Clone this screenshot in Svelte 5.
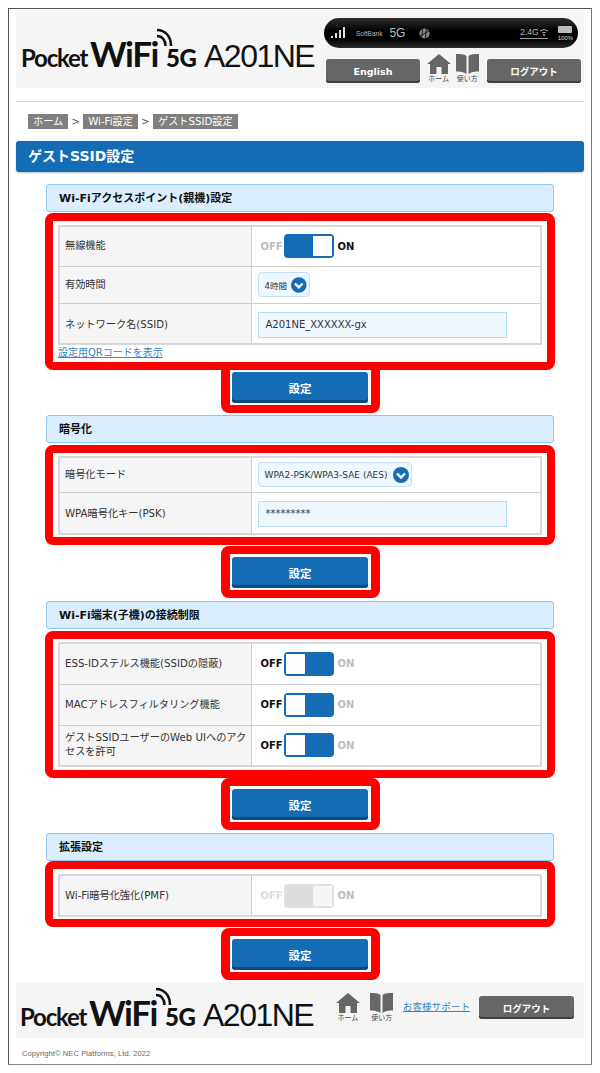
<script>
  const sections = [
    {
      title: 'Wi-Fiアクセスポイント(親機)設定',
      qr: true,
      rows: [
        { label: '無線機能', h: 40, type: 'toggle', on: true },
        { label: '有効時間', h: 37, type: 'select', value: '4時間' },
        { label: 'ネットワーク名(SSID)', h: 41, type: 'input', value: 'A201NE_XXXXXX-gx' },
      ],
    },
    {
      title: '暗号化',
      rows: [
        { label: '暗号化モード', h: 35, type: 'select', value: 'WPA2-PSK/WPA3-SAE (AES)', wide: true },
        { label: 'WPA暗号化キー(PSK)', h: 42, type: 'input', value: '*********' },
      ],
    },
    {
      title: 'Wi-Fi端末(子機)の接続制限',
      rows: [
        { label: 'ESS-IDステルス機能(SSIDの隠蔽)', h: 41, type: 'toggle', on: false },
        { label: 'MACアドレスフィルタリング機能', h: 41, type: 'toggle', on: false },
        { label: 'ゲストSSIDユーザーのWeb UIへのアクセスを許可', h: 41, type: 'toggle', on: false },
      ],
    },
    {
      title: '拡張設定',
      rows: [{ label: 'Wi-Fi暗号化強化(PMF)', h: 41, type: 'toggle', on: true, disabled: true }],
    },
  ]
</script>

{#snippet logo()}
  <div class="logo">
    <span class="l-pocket">Pocket</span>
    <span class="l-wifi">WiFi</span>
    <svg class="l-arcs" viewBox="0 0 18 20" width="18" height="20">
      <g fill="none" stroke="#111" stroke-width="2.6">
        <path d="M2 2 C10 2 16 8 16 18" />
        <path d="M2 8 C7 8 10.500 12 10.500 18" />
      </g>
    </svg>
    <span class="l-5g">5G</span>
    <span class="l-model">A201NE</span>
  </div>
{/snippet}

{#snippet navIcons()}
  <div class="nav-icon">
    <svg viewBox="0 0 24 20" width="24" height="20">
      <path fill="#666" d="M12 0 L24 10 L21 10 L21 20 L14.500 20 L14.500 13 L9.500 13 L9.500 20 L3 20 L3 10 L0 10 Z" />
    </svg>
    <span>ホーム</span>
  </div>
  <div class="nav-icon">
    <svg viewBox="0 0 25 20" width="25" height="20">
      <path fill="#666" d="M1 0 C5 0 9 0 11.500 2 L11.500 20 C9 18 5 17.500 1 17.500 Z M24 0 C20 0 16 0 13.500 2 L13.500 20 C16 18 20 17.500 24 17.500 Z" />
    </svg>
    <span>使い方</span>
  </div>
{/snippet}

<div class="page">
  <div class="frame">
    <header class="top">
      {@render logo()}
      <div class="top-right">
        <div class="status">
          <svg viewBox="0 0 16 12" width="16" height="12">
            <rect x="0" y="9" width="2" height="2" fill="#ddd" />
            <rect x="4" y="6" width="2" height="5" fill="#ddd" />
            <rect x="8" y="3" width="2" height="8" fill="#ddd" />
            <rect x="12" y="0" width="2" height="11" fill="#ddd" />
          </svg>
          <span class="st-sb">SoftBank</span>
          <span class="st-5g">5G</span>
          <svg viewBox="0 0 14 14" width="13" height="13" class="st-globe">
            <circle cx="7" cy="7" r="5.500" fill="#888" />
            <path d="M2 10 L12 4 M5 2 L4 12 M9 1 L8 13" stroke="#111" stroke-width="1" />
          </svg>
          <div class="st-band">
            <span>2.4G</span>
            <svg viewBox="0 0 8 7" width="8" height="7">
              <path d="M0 2 Q4 -1 8 2 M2 4 Q4 2.500 6 4" stroke="#aaa" fill="none" />
              <circle cx="4" cy="6" r="1" fill="#aaa" />
            </svg>
          </div>
          <div class="st-batt">
            <i></i>
            <span>100%</span>
          </div>
        </div>
        <div class="top-nav">
          <button class="gray-btn">English</button>
          {@render navIcons()}
          <button class="gray-btn">ログアウト</button>
        </div>
      </div>
    </header>

    <div class="rule"></div>

    <nav class="crumbs">
      <span class="crumb">ホーム</span><span class="sep">&gt;</span>
      <span class="crumb">Wi-Fi設定</span><span class="sep">&gt;</span>
      <span class="crumb">ゲストSSID設定</span>
    </nav>

    <h1 class="title">ゲストSSID設定</h1>

    <main class="sections">
      {#each sections as sec, i}
        <section class="sec sec-{i}">
          <h2 class="head">{sec.title}</h2>
          <div class="redbox">
            <table>
              <tbody>
                {#each sec.rows as row}
                  <tr style="height:{row.h}px">
                    <th>{row.label}</th>
                    <td>
                      {#if row.type === 'toggle'}
                        <div class="tg" class:disabled={row.disabled}>
                          <span class="tg-off" class:lit={!row.on}>OFF</span>
                          <span class="sw" class:on={row.on}><i></i></span>
                          <span class="tg-on" class:lit={row.on && !row.disabled}>ON</span>
                        </div>
                      {:else if row.type === 'select'}
                        <div class="sel" class:wide={row.wide}>
                          <span>{row.value}</span>
                          <svg viewBox="0 0 16 16" width="16" height="16">
                            <circle cx="8" cy="8" r="8" fill="#146cb4" />
                            <path d="M4 6.500 L8 10.500 L12 6.500" fill="none" stroke="#fff" stroke-width="2.400" />
                          </svg>
                        </div>
                      {:else}
                        <div class="inp">{row.value}</div>
                      {/if}
                    </td>
                  </tr>
                {/each}
              </tbody>
            </table>
            {#if sec.qr}
              <a class="qr" href="#qr">設定用QRコードを表示</a>
            {/if}
          </div>
          <div class="btnbox">
            <button class="save">設定</button>
          </div>
        </section>
      {/each}
    </main>

    <footer class="foot">
      {@render logo()}
      <div class="foot-nav">
        {@render navIcons()}
        <a class="support" href="#support">お客様サポート</a>
        <button class="gray-btn">ログアウト</button>
      </div>
    </footer>
    <p class="copy">Copyright© NEC Platforms, Ltd. 2022</p>
  </div>
</div>

<style>
  :global(body) {
    margin: 0;
    background: #fff;
    font-family: "DejaVu Sans", "Noto Sans CJK JP", sans-serif;
    color: #333;
  }
  .page { padding: 8px 8px 8px 8px; width: 584px; }
  .frame {
    width: 584px; height: 1057px; box-sizing: border-box;
    border: 1px solid #555; border-bottom-color: #888; border-right-color: #777;
    padding: 0 7px;
  }

  /* header */
  .top {
    height: 79px; background: #f5f5f5;
    display: flex; justify-content: space-between; box-sizing: border-box;
    padding: 0 3px 0 5px;
  }
  .logo {
    position: relative; display: flex; align-items: baseline; height: 26px;
    margin-top: 23px; color: #111; font-family: Lato, sans-serif; white-space: nowrap;
  }
  .l-pocket { font-size: 24px; font-weight: 700; letter-spacing: -1.2px; width: 69px; }
  .l-wifi { font-size: 35px; font-weight: 700; width: 76px; letter-spacing: -1.5px; }
  .l-arcs { position: absolute; left: 134px; top: -4px; }
  .l-5g { font-size: 24px; font-weight: 900; width: 38px; letter-spacing: -.5px; }
  .l-model { font-size: 32px; font-family: "Liberation Sans", sans-serif; letter-spacing: -1.5px; }

  .top-right { width: 258px; padding-top: 9px; }
  .status {
    height: 30px; width: 254px; margin-left: 1px; border-radius: 15px; box-sizing: border-box;
    background: linear-gradient(#2e2e2e, #000 45%, #000 70%, #2b2b2b);
    display: flex; align-items: center; padding: 0 5px 0 7px; color: #bbb;
  }
  .st-sb { font-size: 6.500px; margin-left: 9px; font-family: "Liberation Sans", sans-serif; }
  .st-5g { font-size: 12px; margin-left: 7px; font-family: "Liberation Sans", sans-serif; }
  .st-globe { margin-left: 13px; }
  .st-band {
    margin-left: auto; display: flex; align-items: center; gap: 1px;
    border-bottom: 1px solid #999; font-size: 8.500px; padding: 0 0 1px 0;
    font-family: "Liberation Sans", sans-serif;
  }
  .st-batt { margin-left: 10px; display: flex; flex-direction: column; align-items: center; gap: 2px; }
  .st-batt i { display: block; width: 14px; height: 7px; background: #bbb; border-radius: 1px; }
  .st-batt span { font-size: 6px; color: #ddd; font-family: "Liberation Sans", sans-serif; }

  .top-nav { display: flex; align-items: flex-start; margin-top: 11px; padding-left: 3px; gap: 6px; }
  .gray-btn {
    width: 95px; height: 24px; border: 0; border-radius: 3px; padding: 0;
    background: #666; box-shadow: inset 0 -2px 0 #3d3d3d;
    color: #fff; font: 700 9.500px "DejaVu Sans", "Noto Sans CJK JP", sans-serif;
  }
  .nav-icon { display: flex; flex-direction: column; align-items: center; width: 26px; color: #444; font-size: 7px; line-height: 9px; }
  .nav-icon svg { display: block; margin-bottom: 1px; }
  .top-nav .nav-icon { margin-top: -5px; }
  .top-nav .nav-icon:nth-child(3) { margin-left: -3px; margin-right: 1px; }

  .rule { height: 1px; background: #c9d6e6; margin-top: 13px; }

  .crumbs { display: flex; align-items: center; margin: 12px 0 0 12px; height: 15px; font-size: 10.200px; color: #555; }
  .crumb { background: #808080; color: #fff; padding: 0 5px; height: 15px; line-height: 15px; box-sizing: border-box; white-space: nowrap; }
  .sep { width: 15px; text-align: center; }

  .title {
    margin: 12px 0 0; height: 31px; line-height: 30px; padding-left: 12px;
    background: #146cb4; color: #fff; border-radius: 3px;
    font-size: 14px; font-weight: 700; box-shadow: 0 1px 2px rgba(0,0,0,.25);
  }

  /* settings sections */
  .sections { padding: 12px 30px 0; }
  .sec { display: flex; flex-direction: column; align-items: center; }
  .head {
    width: 100%; height: 28px; box-sizing: border-box; margin: 0 0 2px;
    border: 1px solid #8cc8f0; border-radius: 3px; background: #dbeeff;
    padding-left: 12px; line-height: 27px; font-size: 11px; font-weight: 700; color: #111;
  }
  .redbox {
    align-self: stretch; margin: 0 -1px; box-sizing: border-box;
    border: 8px solid #f00; border-radius: 8px; background: #fff;
    padding: 3px 4px 2px 5px;
  }
  .sec-0 .head { margin-bottom: 1px; }
  .sec-0 .redbox { padding: 4px 4px 2px 5px; }
  .sec-1 .redbox { padding: 3px 4px 2px 5px; }
  .sec-2 .redbox { padding: 3px 4px 3px 5px; }
  .sec-3 .head { margin-bottom: 0; }
  .sec-3 .redbox { padding: 5px 4px 2px 5px; }

  table { border-collapse: collapse; width: 484px; table-layout: fixed; border: 2px solid #d8d8d8; }
  th, td { border: 1px solid #ccc; padding: 0; }
  tr:first-child th, tr:first-child td { border-top: 0; }
  th {
    width: 192px; box-sizing: border-box; background: #f5f5f5; padding: 0 3px 0 5px;
    text-align: left; font-weight: 400; font-size: 10.200px; line-height: 14px; color: #333;
  }
  td { padding-left: 6px; }
  .sec-0 tr:last-child th, .sec-0 tr:last-child td,
  .sec-1 tr:last-child th, .sec-1 tr:last-child td { padding-top: 3px; }

  .tg { display: flex; align-items: center; gap: 3px; padding-left: 3px; font-size: 10px; font-weight: 700; color: #bbb; }
  .tg-off { width: 20px; }
  .tg-on { margin-left: 1px; }
  .lit { color: #111; }
  .sw {
    width: 50px; height: 24px; box-sizing: border-box; border: 2px solid #146cb4; border-radius: 4px;
    background: #146cb4; display: flex;
  }
  .sw i { display: block; width: 19px; height: 20px; background: #fff; }
  .sw.on { justify-content: flex-end; }
  .disabled .sw { border-color: #e0e0e0; background: #dcdcdc; }
  .disabled .sw i { background: #f5f5f5; }
  .disabled .lit { color: #bbb; }
  .disabled .tg-off { color: #ddd; }

  .sel {
    display: inline-flex; align-items: center; justify-content: space-between; gap: 4px;
    height: 25px; width: 52px; box-sizing: border-box; padding: 0 2px 0 6px; vertical-align: middle;
    background: #eff7fe; border: 1px solid #bfe0f8; border-radius: 4px; font-size: 8.500px; color: #333;
    white-space: nowrap;
  }
  .sel.wide { width: 154px; font-size: 9px; }
  .inp {
    width: 249px; height: 26px; box-sizing: border-box; padding-left: 7px; line-height: 24px;
    background: #eff7fe; border: 1px solid #b9dff8; font-size: 10px; color: #333; white-space: nowrap;
  }
  .qr { display: block; font-size: 10px; line-height: 14px; color: #3a87c8; margin: 1px 0 0 0; }

  .btnbox {
    width: 159px; height: 52px; box-sizing: border-box; margin: 1px 0 2px;
    border: 8px solid #f00; border-left-width: 9px; border-right-width: 9px; border-radius: 8px;
    display: flex; justify-content: center; padding-top: 3px; background: #fff;
  }
  .sec-0 .btnbox { margin: -8px 0 2px; height: 51px; padding-top: 2px; border-top-left-radius: 0; border-top-right-radius: 0; }
  .sec-1 .btnbox { margin: 1px 0 3px; }
  .sec-2 .btnbox { margin: 0 0 3px; }
  .sec-3 .btnbox { margin: 1px 0 2px; }
  .save {
    width: 136px; height: 31px; border: 0; padding: 0; border-radius: 3px;
    background: #146cb4; box-shadow: inset 0 -3px 0 #0d4a80;
    color: #fff; font: 700 11.500px "DejaVu Sans", "Noto Sans CJK JP", sans-serif;
  }

  /* footer */
  .foot {
    height: 56px; background: #f5f5f5; display: flex; justify-content: space-between; box-sizing: border-box;
    padding: 0 10px 0 4px;
  }
  .foot .logo { margin-top: 9px; }
  .foot-nav { display: flex; align-items: flex-start; padding-top: 11px; }
  .foot-nav .nav-icon { margin-right: 8px; }
  .support { font-size: 9.600px; color: #3a87c8; margin: 6px 9px 0 0; white-space: nowrap; }
  .foot-nav .gray-btn { margin-top: 3px; height: 23px; }
  .copy { margin: 11px 0 0 6px; font: 7.500px "Liberation Sans", sans-serif; color: #666; letter-spacing: .1px; }
</style>
